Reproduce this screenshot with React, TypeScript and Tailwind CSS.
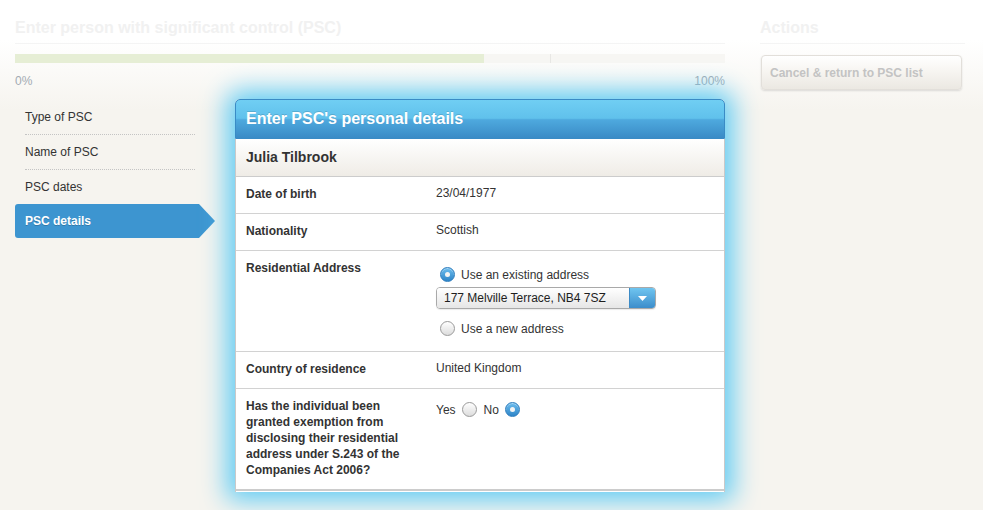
import React from 'react'

const font = "font-['Liberation_Sans',Arial,Helvetica,sans-serif]"

const Radio = ({ checked }: { checked?: boolean }) =>
  checked ? (
    <span className="flex h-[15px] w-[15px] shrink-0 items-center justify-center rounded-full border border-[#2d7cbd] bg-[linear-gradient(#6cbdee,#2e85c8)] shadow-[inset_0_1px_0_rgba(255,255,255,0.4)]">
      <span className="h-[5px] w-[5px] rounded-full bg-[#f4f4f4]" />
    </span>
  ) : (
    <span className="h-[15px] w-[15px] shrink-0 rounded-full border border-[#9a9a9a] bg-[linear-gradient(#ffffff,#dcdcdc)]" />
  )

const navItems = ['Type of PSC', 'Name of PSC', 'PSC dates']

const Row = ({
  label,
  children,
  last,
  valuePad = 'pt-[9px]',
}: {
  label: React.ReactNode
  children: React.ReactNode
  last?: boolean
  valuePad?: string
}) => (
  <div className={`flex ${last ? 'border-b-2 border-[#cccccc]' : 'border-b border-[#d2d2d2]'}`}>
    <div className="w-[200px] shrink-0 pl-[10px] pr-[28px] pt-[9px] pb-[11px] text-[12px] font-bold leading-[16px] text-[#333]">
      {label}
    </div>
    <div className={`flex-1 ${valuePad} text-[12px] leading-[16px] text-[#333]`}>{children}</div>
  </div>
)

export default function App() {
  return (
    <div
      className={`relative h-[510px] w-[983px] overflow-hidden bg-[linear-gradient(#ffffff_0px,#ffffff_40px,#f6f4ef_110px,#f6f4ef_510px)] ${font}`}
    >
      <div className="flex px-[15px]">
        {/* main column */}
        <div className="w-[710px] shrink-0">
          <h1 className="mt-[18px] border-b border-[#f4f4f4] pb-[5px] text-[16px] font-bold leading-[20px] text-[#f1f1f1]">
            Enter person with significant control (PSC)
          </h1>
          <div className="mt-[10px] flex h-[9px] bg-[#f7f6f3]">
            <div className="w-[469px] bg-[#e6eed5]" />
            <div className="ml-[66px] w-px bg-[#e8e7e4]" />
          </div>
          <div className="mt-[11px] flex justify-between text-[12px] leading-[14px] text-[#a3abb3]">
            <span>0%</span>
            <span>100%</span>
          </div>
          <nav className="mt-[12px] w-[200px]">
            {navItems.map((item, i) => (
              <div
                key={item}
                className={`ml-[10px] w-[170px] pt-[9px] pb-[9px] text-[12px] leading-[16px] text-[#333] ${
                  i < navItems.length - 1 ? 'border-b border-dotted border-[#c4c4c4]' : ''
                }`}
              >
                {item}
              </div>
            ))}
            <div className="flex h-[34px]">
              <div className="flex w-[182px] items-center rounded-l-[3px] bg-[#3d95d0] pl-[10px] text-[12px] font-bold text-white [text-shadow:0_1px_0_rgba(0,0,0,0.2)]">
                PSC details
              </div>
              <svg width="18" height="34" viewBox="0 0 18 34" className="block">
                <path d="M0 0 L2 0 L18 17 L2 34 L0 34 Z" fill="#3d95d0" />
              </svg>
            </div>
          </nav>
        </div>

        {/* actions column */}
        <aside className="ml-[35px] w-[205px]">
          <h2 className="mt-[18px] border-b border-[#f4f4f4] pb-[5px] text-[16px] font-bold leading-[20px] text-[#f1f1f1]">
            Actions
          </h2>
          <button className="mt-[11px] ml-px flex h-[35px] w-[201px] items-center rounded-[4px] border border-[#e2dfda] bg-[linear-gradient(#ffffff,#f6f4f0_50%,#ebe8e2)] pl-[8px] text-[12px] font-bold text-[#c3c3c3] shadow-[0_1px_2px_rgba(0,0,0,0.12)]">
            Cancel &amp; return to PSC list
          </button>
        </aside>
      </div>

      {/* dialog */}
      <div className="absolute left-[235px] top-[99px] w-[490px] rounded-t-[5px] shadow-[0_0_26px_8px_#5ecbf4]">
        <div className="flex h-[40px] items-center rounded-t-[5px] border border-[#3a8bc5] bg-[linear-gradient(#70cef3,#60c1ec_48%,#4ea9de_52%,#3a8bc6)] pl-[10px] text-[16px] font-bold text-white [text-shadow:0_-1px_0_rgba(0,0,0,0.15)]">
          Enter PSC's personal details
        </div>
        <div className="border-x border-[#c9c9c9] bg-white">
          <div className="flex h-[38px] items-center border-b border-[#cccccc] bg-[linear-gradient(#ffffff,#efece6)] pl-[10px] text-[14px] font-bold text-[#333]">
            Julia Tilbrook
          </div>
          <Row label="Date of birth" valuePad="pt-[8px]">23/04/1977</Row>
          <Row label="Nationality" valuePad="pt-[8px]">Scottish</Row>
          <Row label="Residential Address" valuePad="pt-[16px] pb-[15px]">
            <label className="flex h-[15px] items-center gap-[6px] pl-[4px]">
              <Radio checked />
              <span>Use an existing address</span>
            </label>
            <div className="mt-[5px] flex h-[22px] w-[220px] overflow-hidden rounded-[4px] border border-[#a9a9a9] shadow-[0_1px_1px_rgba(0,0,0,0.08)]">
              <div className="flex flex-1 items-center bg-[linear-gradient(#ffffff,#e6e6e6)] pl-[7px] text-[12px] text-[#1e1e1e]">
                177 Melville Terrace, NB4 7SZ
              </div>
              <div className="flex w-[26px] items-center justify-center border-l border-[#3d8bc6] bg-[linear-gradient(#6fc5f0,#3c8dcb)]">
                <svg width="9" height="5" viewBox="0 0 9 5">
                  <path d="M0 0 H9 L4.5 5 Z" fill="#ffffff" />
                </svg>
              </div>
            </div>
            <label className="mt-[12px] flex h-[15px] items-center gap-[6px] pl-[4px]">
              <Radio />
              <span>Use a new address</span>
            </label>
          </Row>
          <Row label="Country of residence" valuePad="pt-[8px]">United Kingdom</Row>
          <Row
            last
            label="Has the individual been granted exemption from disclosing their residential address under S.243 of the Companies Act 2006?"
            valuePad="pt-[13px]"
          >
            <div className="flex h-[15px] items-center">
              <span className="mr-[6px]">Yes</span>
              <Radio />
              <span className="ml-[7px] mr-[6px]">No</span>
              <Radio checked />
            </div>
          </Row>
          <div className="h-px bg-white" />
        </div>
      </div>
    </div>
  )
}
